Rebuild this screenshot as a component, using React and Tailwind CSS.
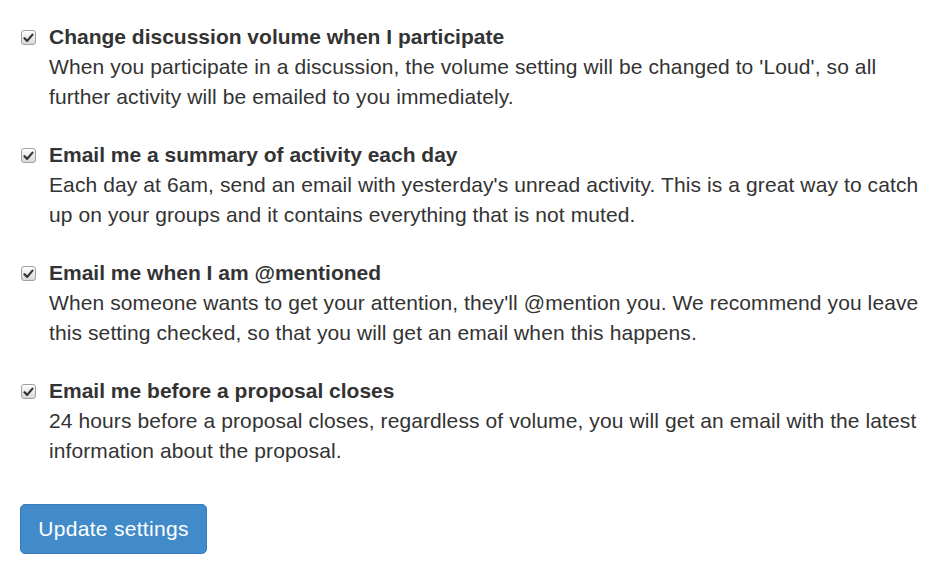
import React from "react";

const items = [
  {
    title: "Change discussion volume when I participate",
    lines: [
      "When you participate in a discussion, the volume setting will be changed to 'Loud', so all",
      "further activity will be emailed to you immediately.",
    ],
  },
  {
    title: "Email me a summary of activity each day",
    lines: [
      "Each day at 6am, send an email with yesterday's unread activity. This is a great way to catch",
      "up on your groups and it contains everything that is not muted.",
    ],
  },
  {
    title: "Email me when I am @mentioned",
    lines: [
      "When someone wants to get your attention, they'll @mention you. We recommend you leave",
      "this setting checked, so that you will get an email when this happens.",
    ],
  },
  {
    title: "Email me before a proposal closes",
    lines: [
      "24 hours before a proposal closes, regardless of volume, you will get an email with the latest",
      "information about the proposal.",
    ],
  },
];

function Check() {
  return (
    <span className="mt-[8px] flex h-[15px] w-[15px] shrink-0 items-center justify-center rounded-[3px] border border-[#a0a0a0] bg-gradient-to-b from-[#fdfdfd] to-[#d8d8d8] shadow-[inset_0_1px_0_#fff]">
      <svg width="11" height="10" viewBox="0 0 11 10">
        <path d="M1.5 5.2 L4.2 7.9 L9.5 1.6" fill="none" stroke="#333" strokeWidth="2.2" strokeLinecap="round" strokeLinejoin="round" />
      </svg>
    </span>
  );
}

export default function App() {
  return (
    <div className="min-h-[574px] w-[942px] bg-white pl-[21px] pt-[22px] text-[21px] leading-[30px] text-[#333] [font-family:'Liberation_Sans',Arial,sans-serif]">
      <div className="flex flex-col gap-[28px]">
        {items.map((it) => (
          <div key={it.title} className="flex gap-[13px]">
            <Check />
            <div>
              <div className="font-bold">{it.title}</div>
              {it.lines.map((l) => (
                <div key={l} className="whitespace-nowrap tracking-[0.1px]">{l}</div>
              ))}
            </div>
          </div>
        ))}
      </div>
      <button className="mt-[38px] ml-[-1px] h-[50px] w-[187px] rounded-[5px] border border-[#3a7bbd] bg-[#428bca] text-[21px] tracking-[0.3px] text-white">
        Update settings
      </button>
    </div>
  );
}
